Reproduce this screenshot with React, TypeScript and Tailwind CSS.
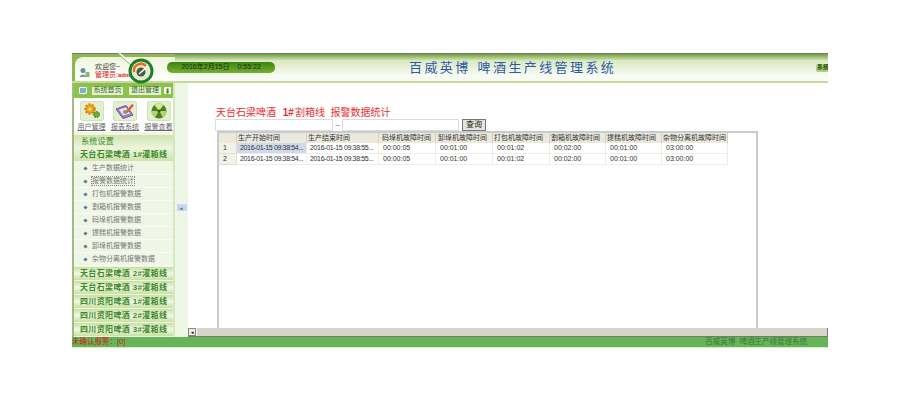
const cjk = "font-['Liberation_Sans','Noto_Sans_CJK_SC',sans-serif]";

const subItems = ["生产数据统计", "报警数据统计", "打包机报警数据", "割箱机报警数据", "码垛机报警数据", "提糕机报警数据", "卸垛机报警数据", "杂物分离机报警数据"];
const groups = ["天台石梁啤酒 2#灌箱线", "天台石梁啤酒 3#灌箱线", "四川资阳啤酒 1#灌箱线", "四川资阳啤酒 2#灌箱线", "四川资阳啤酒 3#灌箱线"];
const cols = [
  ["生产开始时间", "w-[70px] pl-[1px]"],
  ["生产结束时间", "w-[72px] pl-[1px]"],
  ["码垛机故障时间", "w-[57px] pl-[3px]"],
  ["卸垛机故障时间", "w-[57px] pl-[2px]"],
  ["打包机故障时间", "w-[57px] pl-[1px]"],
  ["割箱机故障时间", "w-[56px] pl-[1px]"],
  ["提糕机故障时间", "w-[56px] pl-[1px]"],
  ["杂物分离机故障时间", "w-[66px] pl-[1px]"],
];
const widths = ["w-[70px]", "w-[72px]", "w-[57px]", "w-[57px]", "w-[57px]", "w-[56px]", "w-[56px]", "w-[66px]"];
const rows = [
  ["2016-01-15 09:38:54...", "2016-01-15 09:38:55...", "00:00:05", "00:01:00", "00:01:02", "00:02:00", "00:01:00", "03:00:00"],
  ["2016-01-15 09:38:54...", "2016-01-15 09:38:55...", "00:00:05", "00:01:00", "00:01:02", "00:02:00", "00:01:00", "03:00:00"],
];

function Gear() {
  return (
    <svg width="24" height="20" viewBox="0 0 24 20">
      <rect x="0.5" y="0.5" width="23" height="19" rx="1.5" fill="#e2f0cf" stroke="#cfe3b5" />
      <circle cx="10" cy="8" r="4.5" fill="#f0a818" stroke="#d8860c" strokeWidth="2.5" strokeDasharray="2 1.2" />
      <circle cx="10" cy="8" r="1.6" fill="#fbe8a0" />
      <circle cx="16.5" cy="13.5" r="2.8" fill="#6fae3a" stroke="#4f8f24" strokeWidth="1.6" strokeDasharray="1.5 1" />
    </svg>
  );
}
function Report() {
  return (
    <svg width="24" height="20" viewBox="0 0 24 20">
      <rect x="0.5" y="0.5" width="23" height="19" rx="1.5" fill="#e2f0cf" stroke="#cfe3b5" />
      <path d="M3 8 L13 4.5 L20 14 L10 17.5 Z" fill="#a87cc8" stroke="#6f4d96" />
      <path d="M6 8.5 L13 6.5 L17 12.5 L10 14.5 Z" fill="#e8e4f4" />
      <path d="M12 11 L19 3 L21 4.5 L14 12.5 Z" fill="#e05a48" />
      <circle cx="12" cy="11" r="2" fill="#6fae3a" />
    </svg>
  );
}
function Alarm() {
  return (
    <svg width="24" height="20" viewBox="0 0 24 20">
      <rect x="0.5" y="0.5" width="23" height="19" rx="1.5" fill="#e2f0cf" stroke="#cfe3b5" />
      <circle cx="12" cy="10" r="7.5" fill="#4e7f24" />
      <path d="M12 10 L7.5 4 A7.5 7.5 0 0 1 16.5 4 Z" fill="#d6e890" />
      <path d="M12 10 L19.5 10 A7.5 7.5 0 0 1 16 16.5 Z" fill="#b8d470" />
      <path d="M12 10 L8 16.5 A7.5 7.5 0 0 1 4.5 10 Z" fill="#b8d470" />
      <circle cx="12" cy="10" r="1.6" fill="#2f5a12" />
    </svg>
  );
}
function Logo() {
  return (
    <svg width="26" height="26" viewBox="0 0 26 26">
      <circle cx="13" cy="13" r="12.5" fill="#1f7d2c" />
      <circle cx="13" cy="13" r="9.5" fill="#e4ecd0" />
      <path d="M6 14 A7 7 0 0 1 18 8" fill="none" stroke="#e8701c" strokeWidth="2.5" />
      <circle cx="13" cy="14" r="4.5" fill="#4a5a40" />
      <path d="M11 16 L20 8" stroke="#ffffff" strokeWidth="1.5" />
    </svg>
  );
}

export default function App() {
  return (
    <div className={`${cjk} relative h-[400px] w-[900px] overflow-hidden bg-white pl-[72px] pt-[53px]`}>
      <div className="flex h-[295px] w-[756px] flex-col overflow-hidden">
        {/* header */}
        <header className="relative flex h-[30px] shrink-0 items-center border-b-[2px] border-t border-b-[#c5d99b] border-t-[#777] bg-gradient-to-b from-[#6f9e2e] via-[#dbe9c3] via-[25%] to-[#f8fbf3] to-[80%]">
          <div className="flex h-full w-[103px] shrink-0 bg-[#8fb850] pl-[3px] pt-[3px]">
            <div className="flex h-full w-full items-end rounded-tl-[8px] bg-gradient-to-b from-[#eef5dc] to-white pb-[2px] pl-[4px]">
              <svg width="11" height="11" viewBox="0 0 11 11" className="mb-[1px] shrink-0">
                <circle cx="4" cy="3.5" r="2.5" fill="#6d8aa0" />
                <path d="M0.5 10 C1 6.5 7 6.5 7.5 10 Z" fill="#7f98a8" />
                <rect x="6.5" y="5" width="4" height="5" fill="#8cb860" />
              </svg>
              <div className="ml-[5px] flex flex-col text-[7px] leading-[8px]">
                <span className="text-[#444]">欢迎您~</span>
                <span className="whitespace-nowrap text-[#e02020]">
                  管理员:<b className="text-[6px]">admin</b>
                </span>
              </div>
            </div>
          </div>
          <svg width="20" height="16" viewBox="0 0 20 16" className="absolute left-[46px] top-[-1px] z-10">
            <path d="M1 0 L15 12" stroke="#ffffff" strokeWidth="1.5" />
            <path d="M1 1.5 L14 13" stroke="#8fb850" strokeWidth="1" />
          </svg>
          <div className="absolute left-[56px] top-[4px] z-10">
            <Logo />
          </div>
          <div className="ml-[-8px] flex h-[11px] w-[108px] items-center justify-center gap-[8px] rounded-[5px] bg-gradient-to-b from-[#3a8510] to-[#74b030] pb-[1px] text-[7px] text-[#1d2f08]">
            <span>2016年2月15日</span>
            <span>0:55:22</span>
          </div>
          <div className="ml-[134px] text-[13px] leading-none tracking-[2.4px] whitespace-nowrap text-[#2a5aa8]">
            百威英博<span className="ml-[7px]">啤酒生产线管理系统</span>
          </div>
          <div className="ml-auto flex h-[8px] w-[12px] items-center overflow-hidden rounded-l-[2px] bg-[#a9d07f] pl-[1px] text-[6px] font-bold whitespace-nowrap text-[#2b4a12]">
            系统
          </div>
        </header>

        <div className="flex min-h-0 flex-1">
          {/* sidebar */}
          <aside className="flex w-[103px] shrink-0 flex-col overflow-hidden border-l-[2px] border-r-[2px] border-l-[#a0bc80] border-r-[#d5e8be] bg-[#f0f6e6]">
            <div className="flex h-[15px] shrink-0 items-center bg-[#8ac24a] pl-[5px]">
              <span className="h-[7px] w-[8px] rounded-[1px] border border-white bg-[#7eb0d0]" />
              <span className="ml-[5px] flex h-[8px] w-[31px] items-center justify-center bg-[#e6f0d6] text-[7px] whitespace-nowrap text-[#3c6a1c]">系统首页</span>
              <span className="ml-[6px] flex h-[8px] w-[32px] items-center justify-center bg-[#e6f0d6] text-[7px] whitespace-nowrap text-[#3c6a1c]">退出管理</span>
              <span className="ml-[3px] flex h-[7px] w-[7px] items-center justify-center rounded-[1px] bg-white text-[6px] leading-none text-[#4f8f24]">⬇</span>
            </div>
            <div className="flex h-[34px] shrink-0 gap-[6.5px] bg-white pl-[4px] pt-[3px]">
              {[["用户管理", <Gear key="g" />], ["报表系统", <Report key="r" />], ["报警查看", <Alarm key="a" />]].map(([t, icon], i) => (
                <div key={i} className="flex w-[27px] flex-col items-center">
                  {icon}
                  <span className="mt-[2px] text-[7px] leading-[8px] whitespace-nowrap text-[#666] underline">{t}</span>
                </div>
              ))}
            </div>
            <div className="mt-[3px] flex h-[13px] shrink-0 items-center bg-gradient-to-b from-[#cfe3ad] to-[#eef5de] pl-[7px] text-[8px] tracking-[0.25px] text-[#3a8a2a]">系统设置</div>
            <div className="flex h-[13px] shrink-0 items-center bg-gradient-to-b from-[#eef5de] to-[#cfe3ad] pl-[6px] text-[8px] font-bold tracking-[0.35px] whitespace-nowrap text-[#3a8a2a]">天台石梁啤酒 1#灌箱线</div>
            <div className="mt-[1px] flex flex-col">
              {subItems.map((s, i) => (
                <div key={s} className="flex h-[13px] shrink-0 items-center border-b border-[#f9fcf4] pl-[10px] text-[7px] whitespace-nowrap text-[#777]">
                  <span className="mr-[5px] h-[3px] w-[3px] rotate-45 bg-[#5878a8]" />
                  <span className={i === 1 ? "outline outline-1 outline-dotted outline-[#888] leading-[8px]" : ""}>{s}</span>
                </div>
              ))}
            </div>
            <div className="h-[1px] shrink-0" />
            {groups.map((g) => (
              <div key={g} className="mb-[1px] flex h-[13px] shrink-0 items-center bg-gradient-to-b from-[#c8dfa0] via-[#f2f7e6] to-[#c8dfa0] pl-[6px] text-[8px] font-bold tracking-[0.35px] whitespace-nowrap text-[#3a8a2a]">
                {g}
              </div>
            ))}
          </aside>

          {/* splitter */}
          <div className="flex w-[13px] shrink-0 items-center justify-center bg-[#eef7e6] pb-[5px]">
            <span className="flex h-[7px] w-[10px] items-center justify-center bg-[#c4d8f0] text-[6px] leading-none font-bold text-[#3a5f9a]">«</span>
          </div>

          {/* content */}
          <main className="flex min-w-0 flex-1 flex-col bg-white">
            <div className="ml-[28px] mt-[24px] h-[12px] text-[10px] leading-[12px] whitespace-nowrap text-[#e83030]">
              天台石梁啤酒 <b className="ml-[4px] mr-[1px]">1#</b>割箱线&nbsp; 报警数据统计
            </div>
            <div className="ml-[27px] flex h-[12px] items-center">
              <span className="h-[12px] w-[118px] border border-[#dcdcdc] bg-white" />
              <span className="w-[9px] text-center text-[7px] text-[#555]">--</span>
              <span className="h-[12px] w-[117px] border border-[#dcdcdc] bg-white" />
              <span className="ml-[3px] flex h-[12px] w-[24px] items-center justify-center border border-[#777] bg-[#e4e4d8] text-[8px] text-[#222]">查询</span>
            </div>
            <div className="ml-[29px] flex min-h-0 w-[541px] flex-1 flex-col border-l-[2px] border-r-[2px] border-t-[2px] border-[#c6ccd2]">
              <div className="flex h-[10px] shrink-0 text-[7px] leading-[10px] text-[#333]">
                <div className="w-[18px] shrink-0 border-r border-[#d4d0c0] bg-[#ebe9dc]" />
                {cols.map(([t, w]) => (
                  <div key={t} className={`${w} shrink-0 overflow-hidden border-r border-[#d4d0c0] bg-[#ebe9dc] whitespace-nowrap`}>{t}</div>
                ))}
              </div>
              {rows.map((r, i) => (
                <div key={i} className="flex h-[11px] shrink-0 text-[7px] leading-[10px] text-[#333]">
                  <div className="w-[18px] shrink-0 border-b border-r border-[#e2dfd0] bg-[#f3f2e8] pl-[4px]">{i + 1}</div>
                  {r.map((c, j) => (
                    <div key={j} className={`${widths[j]} shrink-0 overflow-hidden border-b border-r border-[#f0eee2] whitespace-nowrap ${j < 2 ? "pl-[3px] tracking-[-0.35px]" : "pl-[4px]"} ${i === 0 && j === 0 ? "bg-[#cfd9ee]" : ""}`}>{c}</div>
                  ))}
                </div>
              ))}
            </div>
            <div className="flex h-[9px] shrink-0 items-center border-b border-[#777] bg-[#d8d4ca]">
              <span className="flex h-[8px] w-[8px] items-center justify-center border border-[#888] bg-[#eeeae0] text-[5px] leading-none text-black">◂</span>
              <span className="h-[8px] w-[1px] bg-[#f4f2ec]" />
              <span className="ml-auto h-[8px] w-[1px] bg-[#777]" />
            </div>
          </main>
        </div>

        {/* status bar */}
        <footer className="flex h-[11px] shrink-0 items-center justify-between border-b border-[#d8ecc4] bg-[#62b655] text-[7.5px] whitespace-nowrap">
          <span className="text-[#d01818]">未确认报警：[0]</span>
          <span className="mr-[21px] text-[#3e7a3a]">百威英博&nbsp;&nbsp;啤酒生产线管理系统</span>
        </footer>
      </div>
    </div>
  );
}
